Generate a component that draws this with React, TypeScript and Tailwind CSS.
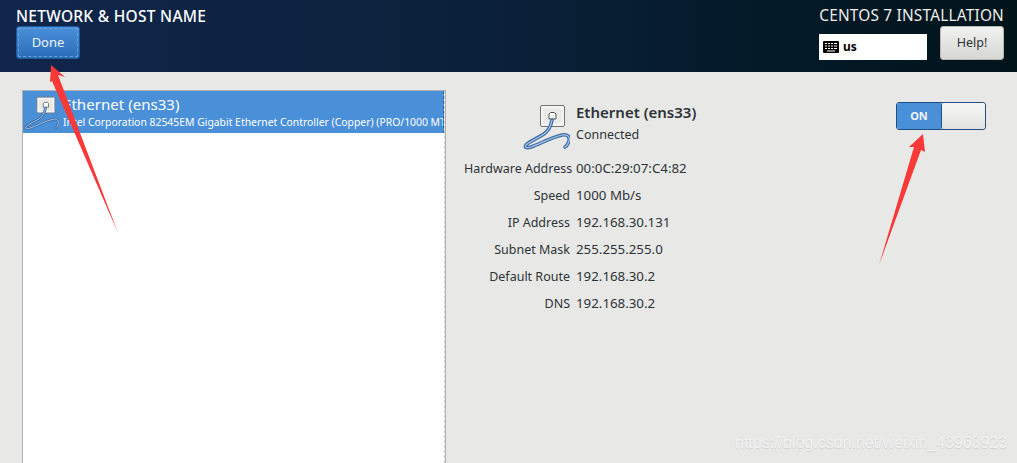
const font = { fontFamily: '"Noto Sans", sans-serif' };

function NetIcon({ className }: { className: string }) {
  const cable = "M30 16C29 22 26 27 22 30C16 34 8 37 4 41C2 44 5 44 9 43C18 40 30 33 40 31C46 30 48 33 47 37C46 40 45 42 43 43";
  return (
    <svg viewBox="0 0 48 48" className={className} fill="none">
      <rect x="18.5" y="1.5" width="24" height="21" rx="1.5" fill="#f3f3f1" stroke="#77777a" />
      <rect x="21.5" y="4.5" width="18" height="15" fill="#e9e9e7" />
      <path d="M27 15v-5l1.5-1.5h4L34 10v5z" fill="#f8f8f8" stroke="#555" strokeWidth="1" />
      <path d={cable} stroke="#3f6ea8" strokeWidth="3.6" strokeLinecap="round" />
      <path d={cable} stroke="#a9c6e8" strokeWidth="1.2" strokeLinecap="round" />
    </svg>
  );
}

function Row({ label, value }: { label: string; value: string }) {
  return (
    <>
      <div className="whitespace-nowrap text-right text-[12.5px] leading-[27px] text-[#2e3436]">{label}</div>
      <div className="whitespace-nowrap text-[13.3px] leading-[27px] text-[#2e3436]">{value}</div>
    </>
  );
}

export default function App() {
  return (
    <div className="relative flex h-[463px] w-[1017px] flex-col overflow-hidden bg-[#e8e8e7]" style={font}>
      <header className="flex h-[72px] shrink-0 justify-between bg-gradient-to-r from-[#10264c] via-[#0b2038] via-50% to-[#00141a] pl-4 pr-[13px] pt-[6px]">
        <div className="flex flex-col items-start">
          <div className="text-[15.5px] font-medium leading-[20px] tracking-[0.27px] text-white">NETWORK &amp; HOST NAME</div>
          <button className="flex h-[33px] w-[64px] items-center justify-center rounded-[3px] border border-[#1e5a9e] bg-gradient-to-b from-[#4a90d9] to-[#2a6cb8] p-[1px] text-[13px] text-[#eef4fb]">
            <span className="flex h-full w-full items-center justify-center border border-dashed border-[#6ba2dc]">Done</span>
          </button>
        </div>
        <div className="flex flex-col items-end">
          <div className="text-[15.4px] leading-[20px] tracking-[0.2px] text-[#eeeeec]">CENTOS 7 INSTALLATION</div>
          <div className="flex items-start gap-[13px]">
            <div className="mt-[8px] flex h-[26px] w-[108px] items-center gap-[4px] bg-white pl-[4px]">
              <svg viewBox="0 0 16 12" className="h-[12px] w-[16px]">
                <rect width="16" height="12" rx="1" fill="#000" />
                <path d="M2 2.5h2M5 2.5h2M8 2.5h2M11 2.5h3M2 5h2M5 5h2M8 5h2M11 5h3M2 7.5h2M5 7.5h2M8 7.5h2M11 7.5h3M4 10h8" stroke="#fff" strokeWidth="1.2" />
              </svg>
              <span className="text-[12px] font-bold text-black">us</span>
            </div>
            <button className="h-[34px] w-[64px] rounded-[3px] border border-[#b8b8b4] bg-gradient-to-b from-[#f2f2f0] to-[#d6d6d3] text-[12.5px] text-[#2e3436]">Help!</button>
          </div>
        </div>
      </header>

      <main className="flex flex-1 pl-[22px] pt-[18px]">
        <section className="w-[424px] border-x border-t border-[#b0b0ae] bg-white">
          <div className="h-full border-r border-dashed border-[#d0d0ce]">
            <div className="flex h-[42px] items-center border-r border-dashed border-[#2a66a8] bg-[#4a90d9] text-white">
              <NetIcon className="mt-[4px] h-[36px] w-[36px] shrink-0" />
              <div className="ml-[4px] min-w-0 overflow-hidden whitespace-nowrap">
                <div className="text-[15.1px] leading-[19px]">Ethernet (ens33)</div>
                <div className="mt-[1px] text-[10.4px] leading-[14px]">Intel Corporation 82545EM Gigabit Ethernet Controller (Copper) (PRO/1000 MT)</div>
              </div>
            </div>
          </div>
        </section>

        <section className="flex flex-1 justify-between pr-[31px]">
          <div className="w-[300px] pl-[18px] pt-[12px]">
            <div className="flex items-start">
              <NetIcon className="ml-[58px] mt-[2px] h-[48px] w-[48px] shrink-0" />
              <div className="ml-[6px]">
                <div className="text-[15px] font-semibold leading-[20px] text-[#2e3436]">Ethernet (ens33)</div>
                <div className="mt-[3px] text-[12.5px] leading-[20px] text-[#2e3436]">Connected</div>
              </div>
            </div>
            <div className="mt-[3px] grid grid-cols-[106px_1fr] gap-x-[6px]">
              <Row label="Hardware Address" value="00:0C:29:07:C4:82" />
              <Row label="Speed" value="1000 Mb/s" />
              <Row label="IP Address" value="192.168.30.131" />
              <Row label="Subnet Mask" value="255.255.255.0" />
              <Row label="Default Route" value="192.168.30.2" />
              <Row label="DNS" value="192.168.30.2" />
            </div>
          </div>
          <div className="mt-[12px] flex h-[28px] w-[90px] overflow-hidden rounded-[3px] border border-[#1f4f82]">
            <div className="flex w-[44px] items-center justify-center bg-[#4a90d9] text-[11px] font-bold text-[#eef4fb]">ON</div>
            <div className="flex-1 rounded-[2px] border-l border-[#1f4f82] bg-gradient-to-b from-[#f6f6f5] to-[#e2e2e0]" />
          </div>
        </section>
      </main>

      <svg className="pointer-events-none absolute left-0 top-0 h-[463px] w-[1017px]" viewBox="0 0 1017 463">
        <polygon points="51,65 65,77 58,75 118,233 52,81 50,82" fill="#f93838" />
        <polygon points="923,134 925,152 921,150 879,265 914,147 909,147" fill="#f93838" />
      </svg>

      <div className="absolute left-[735px] top-[434px] text-[16px] leading-[18px] text-[#f2f2f1] [text-shadow:0_1px_1px_#cfcfcd]" style={{ fontFamily: '"Liberation Sans", sans-serif' }}>
        https://blog.csdn.net/weixin_43968923
      </div>
    </div>
  );
}
